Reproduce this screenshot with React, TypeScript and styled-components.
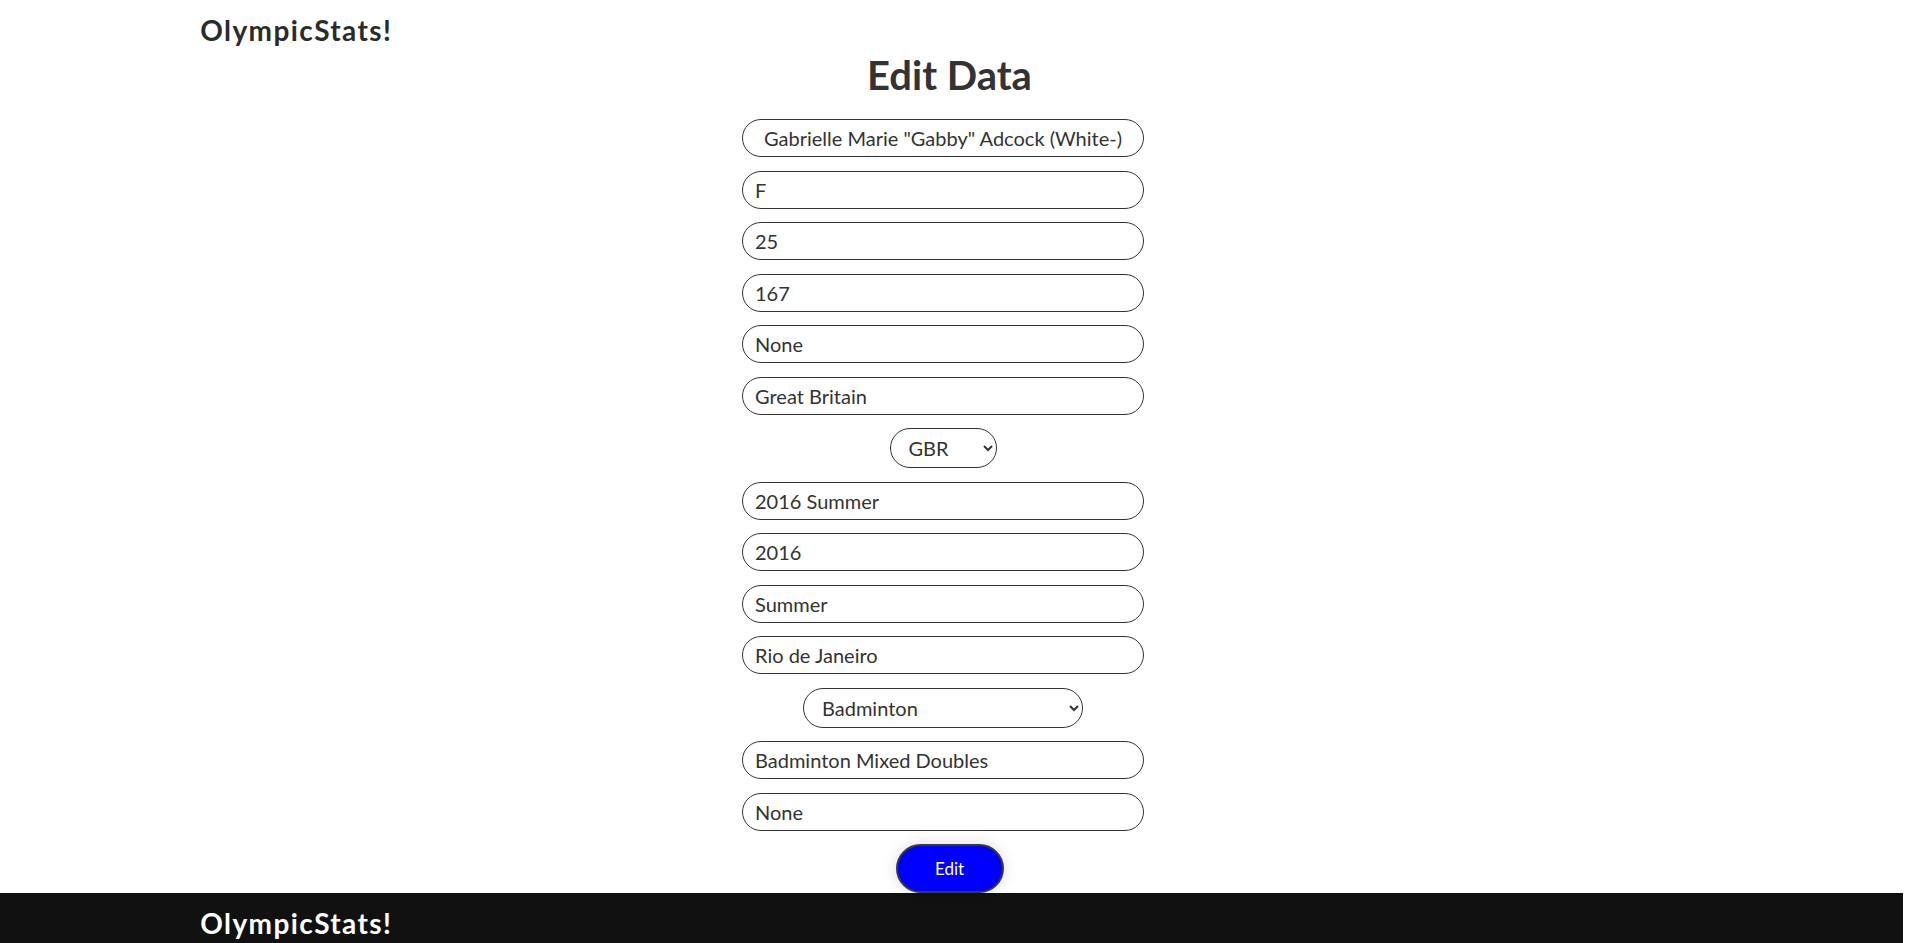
import styled, { createGlobalStyle } from "styled-components";

const GlobalStyle = createGlobalStyle`
  html, body {
    margin: 0;
    padding: 0;
    background: #ffffff;
    font-family: Lato, "Liberation Sans", sans-serif;
    color: #333333;
  }
  body {
    padding-right: 17px;
  }
`;

const Header = styled.header`
  width: 80%;
  margin: 0 auto;
  padding: 14px 10px 0;
  box-sizing: border-box;
`;

const Brand = styled.div<{ $light?: boolean }>`
  font-size: 28px;
  font-weight: 700;
  line-height: 1.2;
  letter-spacing: 1.4px;
  color: ${(p) => (p.$light ? "#ffffff" : "#2b2b2b")};
`;

const Main = styled.main`
  display: flex;
  flex-direction: column;
  align-items: center;
  padding-right: 4px;
`;

const Title = styled.h1`
  margin: 3.6px 0 20px;
  font-size: 40px;
  font-weight: 700;
  line-height: 1.2;
  color: #333333;
`;

const Form = styled.form`
  display: flex;
  flex-direction: column;
  align-items: center;
  gap: 13.5px;
`;

const Field = styled.input<{ $center?: boolean }>`
  box-sizing: border-box;
  width: 402px;
  height: 38px;
  margin-right: 13px;
  padding: 0 12px;
  border: 1px solid #333333;
  border-radius: 19px;
  background: #ffffff;
  font-family: Lato, "Liberation Sans", sans-serif;
  font-size: 20px;
  color: #333333;
  text-align: ${(p) => (p.$center ? "center" : "left")};
  outline: none;
`;

const Picker = styled.select<{ $width: number }>`
  box-sizing: border-box;
  width: ${(p) => p.$width}px;
  height: 40px;
  margin-right: 13px;
  padding: 0 8px 0 14px;
  border: 1px solid #333333;
  border-radius: 20px;
  background: #ffffff;
  font-family: Lato, "Liberation Sans", sans-serif;
  font-size: 20px;
  color: #333333;
  outline: none;
`;

const EditButton = styled.button`
  width: 108px;
  height: 49px;
  border: 2px solid #3a3a3a;
  border-radius: 25px;
  background: #0000ff;
  color: #ffffff;
  font-family: Lato, "Liberation Sans", sans-serif;
  font-size: 17px;
  box-shadow: 0 0 14px rgba(0, 0, 0, 0.15);
  cursor: pointer;
`;

const Footer = styled.footer`
  background: #111111;
  height: 110px;
`;

const FooterInner = styled.div`
  width: 80%;
  margin: 0 auto;
  padding: 13.4px 10px 0;
  box-sizing: border-box;
`;

const countries = ["GBR", "USA", "FRA", "GER", "CHN"];
const sports = ["Badminton", "Athletics", "Swimming", "Tennis", "Rowing"];

export default function App() {
  return (
    <>
      <GlobalStyle />
      <Header>
        <Brand>OlympicStats!</Brand>
      </Header>
      <Main>
        <Title>Edit Data</Title>
        <Form onSubmit={(e) => e.preventDefault()}>
          <Field $center defaultValue={'Gabrielle Marie "Gabby" Adcock (White-)'} />
          <Field defaultValue="F" />
          <Field defaultValue="25" />
          <Field defaultValue="167" />
          <Field defaultValue="None" />
          <Field defaultValue="Great Britain" />
          <Picker $width={107} defaultValue="GBR">
            {countries.map((c) => (
              <option key={c}>{c}</option>
            ))}
          </Picker>
          <Field defaultValue="2016 Summer" />
          <Field defaultValue="2016" />
          <Field defaultValue="Summer" />
          <Field defaultValue="Rio de Janeiro" />
          <Picker $width={280} defaultValue="Badminton">
            {sports.map((s) => (
              <option key={s}>{s}</option>
            ))}
          </Picker>
          <Field defaultValue="Badminton Mixed Doubles" />
          <Field defaultValue="None" />
          <EditButton type="submit">Edit</EditButton>
        </Form>
      </Main>
      <Footer>
        <FooterInner>
          <Brand $light>OlympicStats!</Brand>
        </FooterInner>
      </Footer>
    </>
  );
}
